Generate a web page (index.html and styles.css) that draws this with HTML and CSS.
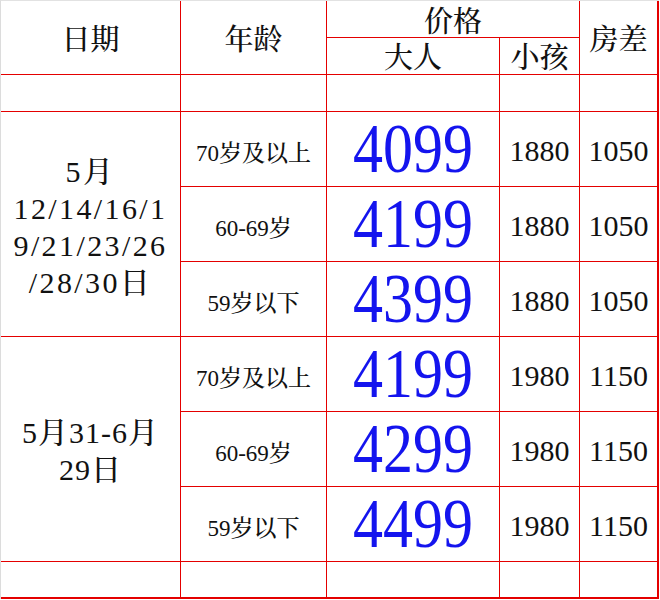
FILE: index.html
```html
<!DOCTYPE html>
<html lang="zh-CN">
<head>
<meta charset="utf-8">
<title>价格表</title>
<link rel="stylesheet" href="styles.css">
</head>
<body>
<div class="sheet">
  <div class="cell head h-date">日期</div>
  <div class="cell head h-age">年龄</div>
  <div class="cell head h-price">价格</div>
  <div class="cell head h-room">房差</div>
  <div class="cell head h-adult">大人</div>
  <div class="cell head h-child">小孩</div>

  <div class="cell"></div><div class="cell"></div><div class="cell"></div><div class="cell"></div><div class="cell"></div>

  <div class="cell date date-a">
    <div class="line">5月</div>
    <div class="line">12/14/16/1</div>
    <div class="line">9/21/23/26</div>
    <div class="line">/28/30日</div>
  </div>
  <div class="cell age">70岁及以上</div><div class="cell big"><span>4099</span></div><div class="cell num">1880</div><div class="cell num">1050</div>
  <div class="cell age">60-69岁</div><div class="cell big"><span>4199</span></div><div class="cell num">1880</div><div class="cell num">1050</div>
  <div class="cell age">59岁以下</div><div class="cell big"><span>4399</span></div><div class="cell num">1880</div><div class="cell num">1050</div>

  <div class="cell date date-b">
    <div class="line">5月31-6月</div>
    <div class="line">29日</div>
  </div>
  <div class="cell age">70岁及以上</div><div class="cell big"><span>4199</span></div><div class="cell num">1980</div><div class="cell num">1150</div>
  <div class="cell age">60-69岁</div><div class="cell big"><span>4299</span></div><div class="cell num">1980</div><div class="cell num">1150</div>
  <div class="cell age">59岁以下</div><div class="cell big"><span>4499</span></div><div class="cell num">1980</div><div class="cell num">1150</div>

  <div class="cell"></div><div class="cell"></div><div class="cell"></div><div class="cell"></div><div class="cell"></div>
</div>
</body>
</html>
```

FILE: styles.css
```css
html, body {
  margin: 0;
  padding: 0;
  background: #ffffff;
}

.sheet {
  display: grid;
  grid-template-columns: 179px 145px 172px 79px 77px;
  grid-template-rows: 36px 36px 36px 74px 74px 74px 74px 74px 74px 35px;
  gap: 1px;
  width: 656px;
  background: #e40000;
  border-left: 1px solid #dcdcdc;
  border-top: 1px solid #e2e2e2;
  padding: 0 2px 2px 0;
  font-family: "Liberation Serif", Tinos, "Times New Roman", Times, "Nimbus Roman", "FreeSerif", "Noto Serif", "DejaVu Serif", "Noto Serif CJK SC", "Noto Sans CJK SC", serif;
  color: #111111;
}

.cell {
  background: #ffffff;
  display: flex;
  align-items: center;
  justify-content: center;
  text-align: center;
}

.head {
  font-size: 29px;
  font-weight: 500;
  line-height: 1;
}

.h-date { grid-column: 1; grid-row: 1 / 3; padding-top: 5px; }
.h-age { grid-column: 2; grid-row: 1 / 3; padding-top: 5px; }
.h-price { grid-column: 3 / 5; grid-row: 1; padding-top: 7px; }
.h-room { grid-column: 5; grid-row: 1 / 3; padding-top: 6px; }
.h-adult { grid-column: 3; grid-row: 2; padding-top: 5px; }
.h-child { grid-column: 4; grid-row: 2; padding-top: 5px; }

.date {
  grid-column: 1;
  flex-direction: column;
  font-size: 30px;
  font-weight: 500;
}

.date .line {
  height: 37px;
  line-height: 37px;
  white-space: nowrap;
}

.date-a { grid-row: 4 / 7; letter-spacing: 2.4px; padding-top: 6px; }
.date-b { grid-row: 7 / 10; letter-spacing: 1px; padding-top: 3px; }

.age {
  font-size: 23px;
  font-weight: 500;
  padding-top: 4px;
}

.big span {
  display: inline-block;
  font-family: "Liberation Serif", Tinos, "Times New Roman", Times, "Nimbus Roman", "FreeSerif", "Noto Serif", "DejaVu Serif", serif;
  font-size: 60px;
  line-height: 1;
  color: #1414ee;
  transform: scaleY(1.16);
}

.num {
  font-family: "Liberation Serif", Tinos, "Times New Roman", Times, "Nimbus Roman", "FreeSerif", "Noto Serif", "DejaVu Serif", serif;
  font-size: 30px;
  padding-top: 3px;
}
```
